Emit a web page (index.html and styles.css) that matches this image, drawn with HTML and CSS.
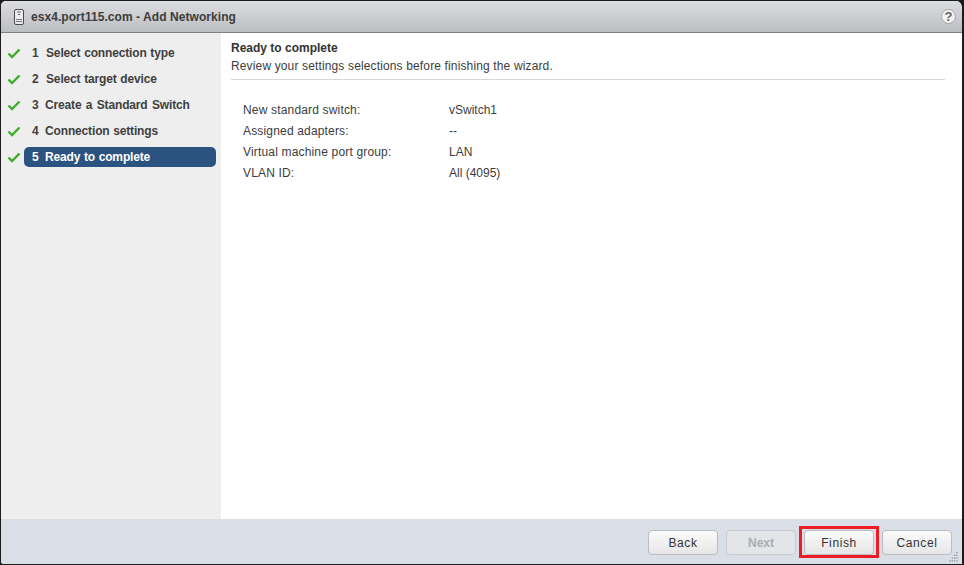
FILE: index.html
```html
<!DOCTYPE html>
<html lang="en">
<head>
<meta charset="utf-8">
<title>Add Networking</title>
<link rel="stylesheet" href="styles.css">
</head>
<body>
<div class="window">
  <header class="titlebar">
    <svg class="host-icon" width="10" height="16" viewBox="0 0 10 16"><rect x="0.5" y="0.5" width="9" height="15" rx="1.5" fill="#ececec" stroke="#4a4a4a"/><rect x="3" y="2.5" width="4" height="1" fill="#666"/><rect x="4" y="5" width="2" height="1" fill="#666"/><rect x="2" y="10" width="6" height="1" fill="#777"/><rect x="2" y="12" width="6" height="1" fill="#777"/></svg>
    <span class="title">esx4.port115.com - Add Networking</span>
    <span class="help">?</span>
  </header>
  <div class="main">
    <nav class="steps">
      <div class="step"><svg class="check" width="14" height="11" viewBox="0 0 14 11"><path d="M1.5 5.5 L5 9 L12.5 1.5" fill="none" stroke="#3fae2a" stroke-width="2.4"/></svg><span class="pill"><b class="num">1</b><span class="gap-wide">Select connection type</span></span></div>
      <div class="step"><svg class="check" width="14" height="11" viewBox="0 0 14 11"><path d="M1.5 5.5 L5 9 L12.5 1.5" fill="none" stroke="#3fae2a" stroke-width="2.4"/></svg><span class="pill"><b class="num">2</b><span class="gap-wide">Select target device</span></span></div>
      <div class="step"><svg class="check" width="14" height="11" viewBox="0 0 14 11"><path d="M1.5 5.5 L5 9 L12.5 1.5" fill="none" stroke="#3fae2a" stroke-width="2.4"/></svg><span class="pill"><b class="num">3</b><span class="wide-words">Create a Standard Switch</span></span></div>
      <div class="step"><svg class="check" width="14" height="11" viewBox="0 0 14 11"><path d="M1.5 5.5 L5 9 L12.5 1.5" fill="none" stroke="#3fae2a" stroke-width="2.4"/></svg><span class="pill"><b class="num">4</b><span>Connection settings</span></span></div>
      <div class="step"><svg class="check" width="14" height="11" viewBox="0 0 14 11"><path d="M1.5 5.5 L5 9 L12.5 1.5" fill="none" stroke="#3fae2a" stroke-width="2.4"/></svg><span class="pill active"><b class="num">5</b><span>Ready to complete</span></span></div>
    </nav>
    <section class="content">
      <div class="heading">
        <h1>Ready to complete</h1>
        <p>Review your settings selections before finishing the wizard.</p>
      </div>
      <dl class="summary">
        <dt>New standard switch:</dt><dd>vSwitch1</dd>
        <dt>Assigned adapters:</dt><dd>--</dd>
        <dt>Virtual machine port group:</dt><dd>LAN</dd>
        <dt>VLAN ID:</dt><dd>All (4095)</dd>
      </dl>
    </section>
  </div>
  <footer class="footer">
    <button class="btn" type="button">Back</button>
    <button class="btn disabled" type="button" disabled>Next</button>
    <span class="highlight"><button class="btn" type="button">Finish</button></span>
    <button class="btn" type="button">Cancel</button>
    <svg class="grip" width="10" height="10" viewBox="0 0 11 11" fill="#8a9099"><rect x="8" y="0" width="1.4" height="1.4"/><rect x="5.5" y="3" width="1.4" height="1.4"/><rect x="8" y="3" width="1.4" height="1.4"/><rect x="3" y="6" width="1.4" height="1.4"/><rect x="5.5" y="6" width="1.4" height="1.4"/><rect x="8" y="6" width="1.4" height="1.4"/><rect x="0.5" y="9" width="1.4" height="1.4"/><rect x="3" y="9" width="1.4" height="1.4"/><rect x="5.5" y="9" width="1.4" height="1.4"/><rect x="8" y="9" width="1.4" height="1.4"/></svg>
  </footer>
</div>
</body>
</html>
```
FILE: styles.css
```css
* { box-sizing: border-box; }
html, body { margin: 0; height: 100%; background: #1a1a1a; overflow: hidden; }
body { font-family: "Liberation Sans", Arial, sans-serif; font-size: 12px; color: #333; }
.window {
  width: 964px; height: 565px;
  display: flex; flex-direction: column;
  border: solid #1c1c1c; border-width: 1px 2px 1px 1px;
  border-radius: 6px 8px 0 4px;
  overflow: hidden; background: #fff;
}
.titlebar {
  height: 32px; flex: none;
  display: flex; align-items: center;
  padding: 1px 6px 0 13px;
  background: linear-gradient(#dcdde0, #bdbec2);
  border-bottom: 1px solid #7f8083;
}
.host-icon { flex: none; margin-right: 7px; }
.title { font-size: 12px; font-weight: bold; color: #3c3c3c; flex: 1; letter-spacing: 0.06px; }
.help {
  width: 15px; height: 15px; border-radius: 50%;
  border: 1px solid #a3a3a3; background: #f2f2f2;
  color: #666; font-size: 13px; font-weight: bold;
  display: flex; align-items: center; justify-content: center;
  margin-top: -2px;
}
.main { flex: 1; display: flex; min-height: 0; }
.steps {
  width: 220px; flex: none;
  background: #eeeeee;
  padding: 10px 5px 0 6px;
  display: flex; flex-direction: column; gap: 6px;
}
.step { display: flex; align-items: center; height: 20px; }
.check { flex: none; margin-right: 3px; }
.pill {
  flex: 1; height: 20px; display: flex; align-items: center;
  padding-left: 8px; border-radius: 5px;
  font-size: 12px; font-weight: bold; color: #3f3f3f;
  letter-spacing: -0.15px; word-spacing: 0.5px;
}
.num { width: 13px; flex: none; }
.gap-wide { margin-left: 1px; }
.wide-words { word-spacing: 1.2px; }
.pill.active { background: #2b5380; color: #fff; }
.content { flex: 1; padding: 8px 17px 0 10px; background: #fff; }
.heading { border-bottom: 1px solid #d8d8d8; padding-bottom: 5px; }
h1 { margin: 0 0 4px; font-size: 12px; line-height: 14px; font-weight: bold; color: #333; }
.heading p { margin: 0; font-size: 12px; line-height: 15px; color: #3c3c3c; letter-spacing: 0.14px; }
.summary {
  margin: 19px 0 0 12px;
  display: grid; grid-template-columns: 206px 1fr;
  grid-auto-rows: 21px; align-items: center;
  color: #3c3c3c;
}
.summary dt, .summary dd { margin: 0; }
.summary dt { letter-spacing: 0.17px; }
.footer {
  height: 45px; flex: none;
  position: relative;
  display: flex; align-items: center; justify-content: flex-end; gap: 8px;
  padding: 2px 10px 0 0;
  background: #dadee6;
}
.btn {
  width: 70px; height: 25px; padding: 0;
  border: 1px solid #b9bcc0; border-radius: 4px;
  background: linear-gradient(#fbfbfb, #e6e6e6);
  font: 12px "Liberation Sans", Arial, sans-serif; color: #333;
  letter-spacing: 0.6px;
}
.btn.disabled {
  font-weight: bold; color: #a9aeb0; letter-spacing: 0;
  background: #e3e5e9; border-color: #c8ccd0;
}
.highlight { display: flex; position: relative; }
.highlight::after {
  content: ""; position: absolute;
  inset: -4px -5px -3px -5px;
  border: 3px solid #ed1c24;
  pointer-events: none;
}
.grip { position: absolute; right: 3px; bottom: 2px; }
```
